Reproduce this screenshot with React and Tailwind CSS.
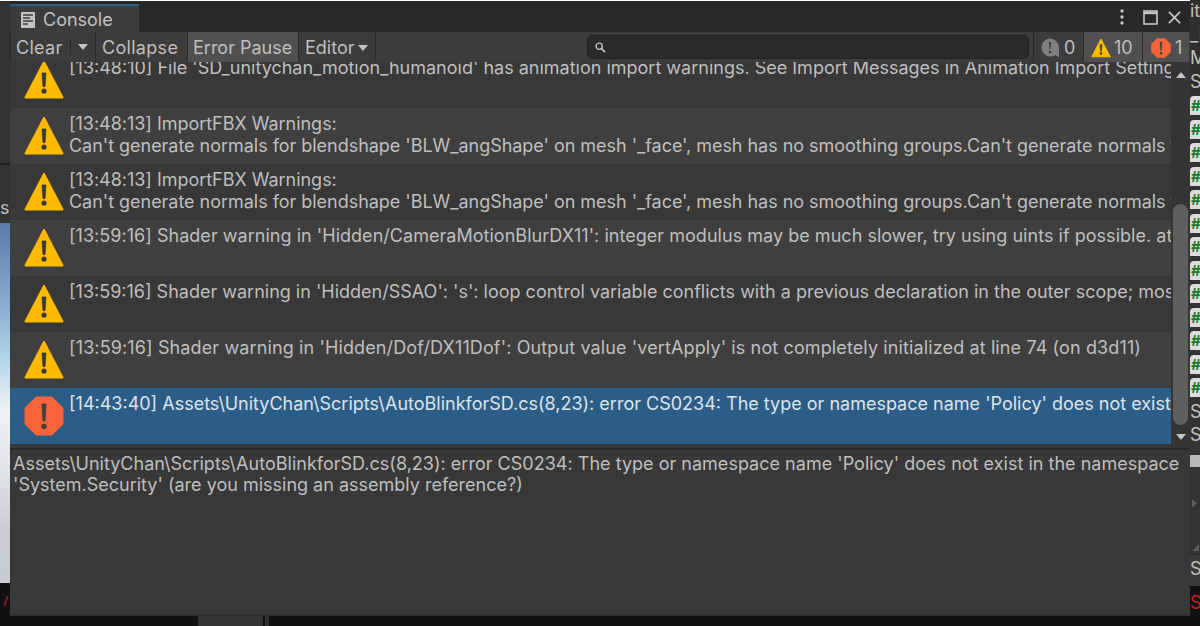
import React from 'react'

const rows = [
  { kind: 'warn', lines: ["[13:48:10] File 'SD_unitychan_motion_humanoid' has animation import warnings. See Import Messages in Animation Import Settings"], first: true },
  { kind: 'warn', tracking: 'tracking-[-0.03px]', lines: ['[13:48:13] ImportFBX Warnings:', "Can't generate normals for blendshape 'BLW_angShape' on mesh '_face', mesh has no smoothing groups.Can't generate normals for"] },
  { kind: 'warn', tracking: 'tracking-[-0.03px]', lines: ['[13:48:13] ImportFBX Warnings:', "Can't generate normals for blendshape 'BLW_angShape' on mesh '_face', mesh has no smoothing groups.Can't generate normals for"] },
  { kind: 'warn', tracking: 'tracking-[0.03px]', lines: ["[13:59:16] Shader warning in 'Hidden/CameraMotionBlurDX11': integer modulus may be much slower, try using uints if possible. at"] },
  { kind: 'warn', lines: ["[13:59:16] Shader warning in 'Hidden/SSAO': 's': loop control variable conflicts with a previous declaration in the outer scope; most"] },
  { kind: 'warn', tracking: 'tracking-[0.12px]', lines: ["[13:59:16] Shader warning in 'Hidden/Dof/DX11Dof': Output value 'vertApply' is not completely initialized at line 74 (on d3d11)"] },
  { kind: 'error', lines: ["[14:43:40] Assets\\UnityChan\\Scripts\\AutoBlinkforSD.cs(8,23): error CS0234: The type or namespace name 'Policy' does not exist"], selected: true },
]

function WarnIcon({ className }) {
  return (
    <svg viewBox="0 0 40 40" className={className}>
      <path d="M20 2 L38.5 37.5 L1.5 37.5 Z" fill="#ffbb00" stroke="#ffbb00" strokeWidth="2" strokeLinejoin="round" />
      <path d="M18 13 h4 l-1 13.5 h-2 Z" fill="#3a3a3a" stroke="#3a3a3a" strokeWidth="0.8" strokeLinejoin="round" />
      <circle cx="20" cy="31" r="2.6" fill="#3a3a3a" />
    </svg>
  )
}

function ErrorIcon({ className }) {
  return (
    <svg viewBox="0 0 40 40" className={className}>
      <path d="M12 1 H28 L39 12 V28 L28 39 H12 L1 28 V12 Z" fill="#f9633a" stroke="#f9633a" strokeWidth="1" strokeLinejoin="round" />
      <path d="M18 8 h4 l-1 17 h-2 Z" fill="#3f3f3f" stroke="#3f3f3f" strokeWidth="0.8" strokeLinejoin="round" />
      <circle cx="20" cy="30.5" r="2.7" fill="#3f3f3f" />
    </svg>
  )
}

function InfoIcon({ className }) {
  return (
    <svg viewBox="0 0 20 20" className={className}>
      <path d="M10 0.5 A9 9 0 0 1 19 9.5 V19.5 L15.5 17 A9 9 0 1 1 10 0.5 Z" fill="#7f7f7f" />
      <path d="M9 4 h2 l-0.4 7 h-1.2 Z" fill="#3a3a3a" />
      <circle cx="10" cy="14" r="1.3" fill="#3a3a3a" />
    </svg>
  )
}

function Caret({ className }) {
  return (
    <svg viewBox="0 0 10 6" className={className}>
      <path d="M0 0 H10 L5 6 Z" fill="#c4c4c4" />
    </svg>
  )
}

function Row({ row, index }) {
  const bg = row.selected ? 'bg-[#2c5d87]' : index % 2 === 1 ? 'bg-[#3f3f3f]' : 'bg-[#383838]'
  return (
    <div className={`flex h-[56px] shrink-0 ${bg} ${row.first ? '-mt-[10px]' : ''}`}>
      <div className="w-[59px] shrink-0 pl-[14px] pt-[8px]">
        {row.kind === 'warn' ? <WarnIcon className="w-[40px] h-[40px]" /> : <ErrorIcon className="w-[40px] h-[40px]" />}
      </div>
      <div className={`min-w-0 flex-1 overflow-hidden pt-[5px] whitespace-nowrap text-[18px] leading-[22px] ${row.tracking || ''} ${row.selected ? 'text-[#dbe4ec]' : 'text-[#bfbfbf]'}`}>
        {row.lines.map((l, i) => <div key={i}>{l}</div>)}
      </div>
    </div>
  )
}

function Sep() {
  return <div className="w-[1px] h-full bg-[#2a2a2a] shrink-0" />
}

function LeftStrip() {
  return (
    <div className="w-[10px] shrink-0 flex flex-col overflow-hidden text-[#bfbfbf] text-[18px]">
      <div className="h-[163px] shrink-0 bg-[#333333]" />
      <div className="h-[60px] shrink-0 bg-[#333333] border-t-2 border-[#1f1f1f] pt-[32px] leading-[22px]">s</div>
      <div className="h-[360px] shrink-0 bg-[linear-gradient(180deg,#5c7aa8_0%,#87aace_22%,#b4d6e8_38%,#eef2f4_52%,#e4e8ea_66%,#c8ced2_85%,#c4ccd0_100%)]" />
      <div className="flex-1 bg-[#111111] pt-[13px] pl-[5px]">
        <div className="w-[2px] h-[10px] bg-[#8a1a1a] rotate-[20deg]" />
      </div>
    </div>
  )
}

function RightStrip() {
  return (
    <div className="w-[10px] shrink-0 flex flex-col overflow-hidden text-[#bfbfbf] text-[18px] leading-[23.5px] bg-[#333333] whitespace-nowrap">
      <div className="h-[94px] shrink-0 bg-[#2f2f2f] -mt-[1px] box-content pb-[1px]">
        <div>it</div>
        <div>_i</div>
        <div>M</div>
        <div>S</div>
      </div>
      <div className="shrink-0 flex flex-col">
        {[0, 1, 2, 3, 4, 5, 6, 7, 8, 9, 10, 11, 12].map(i => (
          <div key={i} className="h-[23.5px] pt-[2px] shrink-0">
            <div className="h-[19px] w-[20px] bg-[#dcdcdc] rounded-tl-sm text-[#1f7a33] text-[15px] leading-[19px] font-bold pl-[1px]">#</div>
          </div>
        ))}
      </div>
      <div className="h-[23.5px] shrink-0">S</div>
      <div className="h-[23.5px] shrink-0">S</div>
      <div className="h-[8px] shrink-0" />
      <div className="h-[12px] shrink-0 bg-[#b9b9b9]" />
      <div className="h-[87px] shrink-0 flex flex-col items-start pt-[32px] pl-[2px] gap-[36px]">
        <svg viewBox="0 0 6 10" className="w-[5px] h-[9px]"><path d="M0 0 L6 5 L0 10 Z" fill="#5a5a5a" /></svg>
        <svg viewBox="0 0 8 8" className="w-[7px] h-[7px]"><path d="M8 0 V8 H0 Z" fill="#5a5a5a" /></svg>
      </div>
      <div className="h-[32px] shrink-0 pt-[2px] bg-[#3a3a3a] border-t border-[#262626]">S</div>
      <div className="flex-1 bg-[#111111] text-[#c22222] pt-[5px]">Sy</div>
    </div>
  )
}

export default function App() {
  return (
    <div className="w-[1200px] h-[626px] overflow-hidden flex bg-[#111111] font-['Inter',sans-serif]">
      <LeftStrip />
      <div className="flex-1 min-w-0 flex flex-col">
        <div className="h-[1px] bg-white -mx-[10px] shrink-0" />
        <div className="flex-1 min-h-0 flex flex-col bg-[#383838]">
          {/* tab bar */}
          <div className="h-[31px] shrink-0 bg-[#282828] flex items-stretch">
            <div className="w-[129px] mt-[3px] bg-[#3c3c3c] border-t-2 border-[#2c5d87] flex items-center pl-[11px] gap-[8px] text-[#c2c2c2] text-[18px] pt-[1px]">
              <svg viewBox="0 0 14 16" className="w-[14px] h-[16px]">
                <path d="M0 0 H14 V16 H0 Z" fill="#c2c2c2" />
                <path d="M2 3 H12 M2 6 H9 M2 9 H12 M2 12 H7" stroke="#3c3c3c" strokeWidth="1.3" />
              </svg>
              Console
            </div>
            <div className="flex-1" />
            <div className="flex items-center gap-[12px] pr-[9px] pt-[1px]">
              <svg viewBox="0 0 4 16" className="w-[4px] h-[16px]">
                <circle cx="2" cy="2" r="1.7" fill="#c6c6c6" />
                <circle cx="2" cy="8" r="1.7" fill="#c6c6c6" />
                <circle cx="2" cy="14" r="1.7" fill="#c6c6c6" />
              </svg>
              <svg viewBox="0 0 15 15" className="w-[15px] h-[15px] ml-[7px]">
                <rect x="1" y="1" width="13" height="13" fill="none" stroke="#c6c6c6" strokeWidth="1.6" />
                <path d="M1 3 H14" stroke="#c6c6c6" strokeWidth="2.4" />
              </svg>
              <svg viewBox="0 0 14 14" className="w-[13px] h-[13px] -ml-[2px]">
                <path d="M1 1 L13 13 M13 1 L1 13" stroke="#c6c6c6" strokeWidth="1.8" />
              </svg>
            </div>
          </div>

          {/* toolbar */}
          <div className="h-[30px] shrink-0 bg-[#3c3c3c] flex items-center text-[18px] leading-[30px] text-[#bfbfbf] relative z-10">
            <Sep />
            <div className="w-[59px] pl-[5px] shrink-0 tracking-[0.3px] pt-[1px]">Clear</div>
            <div className="w-[1px] h-[16px] bg-[#2a2a2a] shrink-0" />
            <div className="w-[24px] flex justify-center shrink-0"><Caret className="w-[10px] h-[6px]" /></div>
            <Sep />
            <div className="w-[91px] pl-[6px] shrink-0 tracking-[0.3px] pt-[1px]">Collapse</div>
            <Sep />
            <div className="w-[110px] h-full flex items-center pl-[5px] bg-[#505050] shrink-0 pt-[1px]">Error Pause</div>
            <Sep />
            <div className="w-[76px] pl-[6px] flex items-center gap-[4px] shrink-0 pt-[1px]">Editor <Caret className="w-[10px] h-[6px]" /></div>
            <Sep />
            <div className="flex-1" />
            <div className="w-[442px] h-[24px] bg-[#2a2a2a] rounded-[6px] border border-[#222222] flex items-center pl-[7px] shrink-0">
              <svg viewBox="0 0 12 12" className="w-[11px] h-[11px]">
                <circle cx="4.6" cy="4.6" r="3.4" fill="none" stroke="#c2c2c2" strokeWidth="1.5" />
                <path d="M7.2 7.2 L11 11" stroke="#c2c2c2" strokeWidth="1.8" />
              </svg>
            </div>
            <div className="w-[4px] shrink-0" />
            <Sep />
            <div className="w-[49px] h-full flex items-center pl-[6px] gap-[4px] shrink-0 pt-[1px]">
              <InfoIcon className="w-[20px] h-[20px]" />0
            </div>
            <Sep />
            <div className="w-[58px] h-full flex items-center pl-[7px] gap-[3px] bg-[#505050] shrink-0 pt-[1px]">
              <WarnIcon className="w-[20px] h-[20px]" />10
            </div>
            <Sep />
            <div className="w-[46px] h-full flex items-center pl-[8px] gap-[4px] bg-[#505050] shrink-0 pt-[1px]">
              <ErrorIcon className="w-[20px] h-[20px]" />1
            </div>
            <div className="w-[1px] shrink-0" />
          </div>

          {/* log list */}
          <div className="h-[386px] shrink-0 flex overflow-hidden">
            <div className="flex-1 min-w-0 flex flex-col">
              {rows.map((r, i) => <Row key={i} row={r} index={i} />)}
            </div>
            <div className="w-[19px] shrink-0 bg-[#353535] flex flex-col items-center pt-[10px]">
              <Caret className="w-[10px] h-[6px] rotate-180" />
              <div className="w-[15px] h-[221px] mt-[126px] bg-[#5f5f5f] rounded-[8px]" />
              <Caret className="w-[10px] h-[6px] mt-[9px]" />
            </div>
          </div>

          {/* splitter + details */}
          <div className="flex-1 min-h-0 flex flex-col border-t-2 border-[#2b2b2b] pt-[3px] pl-[3px] text-[18px] leading-[21px] text-[#bfbfbf] whitespace-nowrap border-b-[2px] border-b-[#2f2f2f]">
            <div className="tracking-[0.015px]">Assets\UnityChan\Scripts\AutoBlinkforSD.cs(8,23): error CS0234: The type or namespace name 'Policy' does not exist in the namespace</div>
            <div>'System.Security' (are you missing an assembly reference?)</div>
          </div>
        </div>

        {/* strip below the window */}
        <div className="h-[10px] shrink-0 bg-[#111111] flex">
          <div className="w-[188px] shrink-0" />
          <div className="w-[65px] bg-[#333333] shrink-0" />
          <div className="w-[2px] shrink-0" />
          <div className="w-[4px] bg-[#333333] shrink-0" />
        </div>
      </div>
      <RightStrip />
    </div>
  )
}
